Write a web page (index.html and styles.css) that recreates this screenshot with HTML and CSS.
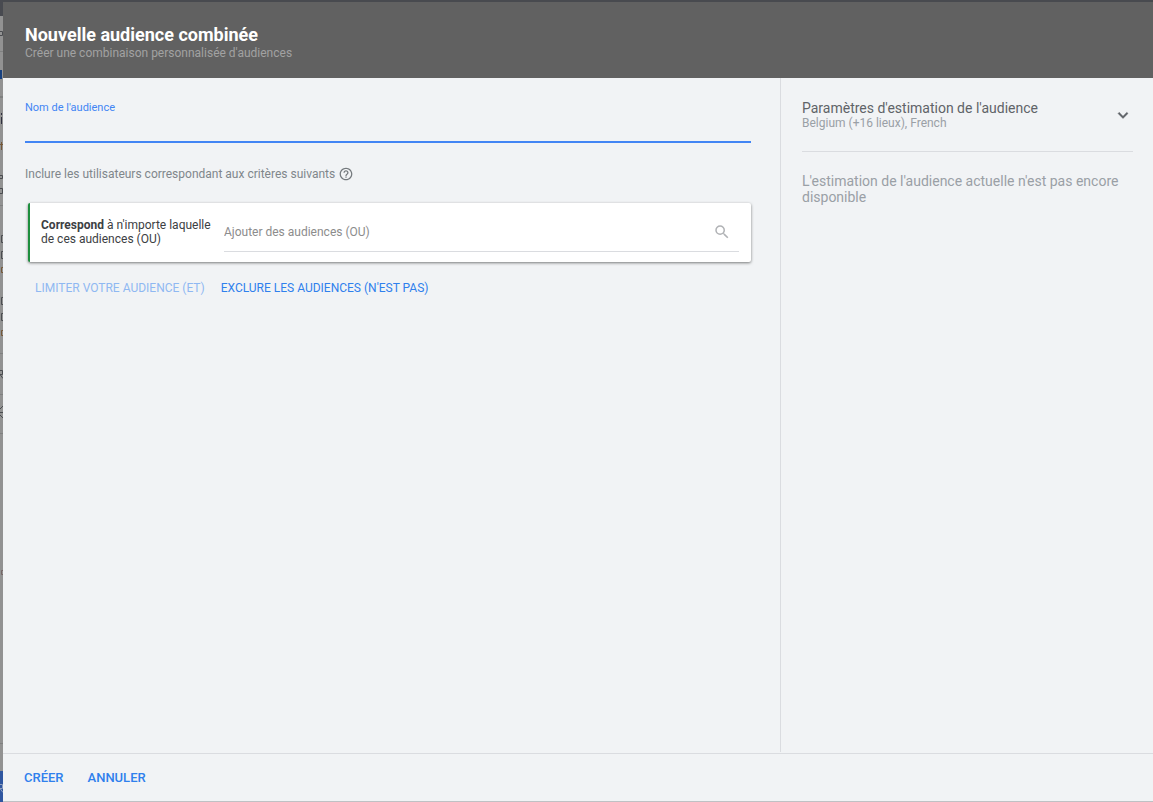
FILE: index.html
```html
<!DOCTYPE html>
<html lang="fr">
<head>
<meta charset="utf-8">
<meta name="viewport" content="width=device-width, initial-scale=1">
<title>Nouvelle audience combinée</title>
<link rel="stylesheet" href="styles.css">
</head>
<body>
<svg class="backdrop" width="3" height="802" viewBox="0 0 3 802" aria-hidden="true">
  <path fill="#929292" d="M0 0h3v802H0z"/>
  <path fill="#484a50" d="M0 0h3v16H0z"/>
  <path fill="#7f8080" d="M0 51h3v1H0zM0 96h3v2H0zM0 205h3v1H0zM0 353h3v1H0zM0 394h3v1H0zM0 433h3v1H0zM0 743h3v1H0z"/>
  <path fill="none" stroke="#4a4c50" d="M0 31.500h2.500v4H0M3 235.500H1.500v7H3M3 251.500H1.500v7H3M3 297.500H1.500v7H3M3 313.500H1.500v7H3M0 370.500h2.500v4H0l3 4M3 406l-3 3M0 412.500h3M0 415l3 3M0 188.500h2.500v5H0M0 175.500h2.500v3H0"/>
  <path fill="#17407f" d="M0 70h2v9H0z"/>
  <path fill="#2f3040" d="M1 117h1v7H1zM1 113h1v2H1z"/>
  <path fill="none" stroke="#755838" d="M1.500 142v8M0 144.500h3M3 267.500H1.500v5H3M3 330.500H1.500v5H3"/>
  <path fill="none" stroke="#756666" d="M3 570.500H1.500v4H3"/>
  <path fill="#2f56a0" d="M0 771h3v31H0z"/>
  <path fill="none" stroke="#8fa0c0" d="M0 784.500h2.500v4H0l3 4"/>
</svg>
<div class="dialog" role="dialog" aria-labelledby="dialog-title">
  <header class="header">
    <h1 class="title" id="dialog-title">Nouvelle audience combinée</h1>
    <p class="subtitle">Créer une combinaison personnalisée d'audiences</p>
  </header>
  <div class="body">
    <main class="editor">
      <div class="field">
        <label class="field-label" for="name">Nom de l'audience</label>
        <input class="field-input" id="name" type="text">
      </div>
      <div class="criteria">
        <span>Inclure les utilisateurs correspondant aux critères suivants</span>
        <button class="help" type="button" aria-label="Aide">
          <svg width="14" height="14" viewBox="1 1 22 22"><path fill="currentColor" d="M11 18h2v-2h-2v2zm1-16C6.480 2 2 6.480 2 12s4.480 10 10 10 10-4.480 10-10S17.520 2 12 2zm0 18c-4.410 0-8-3.590-8-8s3.590-8 8-8 8 3.590 8 8-3.590 8-8 8zm0-14c-2.210 0-4 1.790-4 4h2c0-1.100.9-2 2-2s2 .9 2 2c0 2-3 1.750-3 5h2c0-2.250 3-2.500 3-5 0-2.210-1.790-4-4-4z"/></svg>
        </button>
      </div>
      <section class="card">
        <label class="card-label" for="audiences"><b>Correspond</b> à n'importe laquelle de ces audiences (OU)</label>
        <div class="search">
          <input class="search-input" id="audiences" type="text" placeholder="Ajouter des audiences (OU)">
          <svg class="search-icon" width="18" height="18" viewBox="0 0 24 24" aria-hidden="true"><path fill="currentColor" d="M15.500 14h-.79l-.28-.27A6.470 6.470 0 0 0 16 9.500 6.500 6.500 0 1 0 9.500 16c1.610 0 3.090-.59 4.230-1.570l.27.28v.79l5 4.990L20.490 19l-4.990-5zm-6 0C7.010 14 5 11.990 5 9.500S7.010 5 9.500 5 14 7.010 14 9.500 11.990 14 9.500 14z"/></svg>
        </div>
      </section>
      <div class="links">
        <button class="text-button" type="button" disabled>LIMITER VOTRE AUDIENCE (ET)</button>
        <button class="text-button" type="button">EXCLURE LES AUDIENCES (N'EST PAS)</button>
      </div>
    </main>
    <aside class="side">
      <button class="settings" type="button" aria-expanded="false">
        <span class="settings-text">
          <span class="settings-title">Paramètres d'estimation de l'audience</span>
          <span class="settings-value">Belgium (+16 lieux), French</span>
        </span>
        <svg class="chevron" width="20" height="20" viewBox="0 0 24 24" aria-hidden="true"><path fill="currentColor" d="M7.410 8.840 12 13.420l4.590-4.580L18 10.250l-6 6-6-6z" stroke="currentColor" stroke-width=".5"/></svg>
      </button>
      <p class="estimate">L'estimation de l'audience actuelle n'est pas encore disponible</p>
    </aside>
  </div>
  <footer class="footer">
    <button class="action" type="button">CRÉER</button>
    <button class="action" type="button">ANNULER</button>
  </footer>
</div>
</body>
</html>
```
FILE: styles.css
```css
* { box-sizing: border-box; }

body {
  margin: 0;
  background: #484a50;
  font-family: Roboto, "Liberation Sans", sans-serif;
  font-size: 12px;
  line-height: 14px;
  color: #3c4043;
}

h1, p { margin: 0; }

button {
  padding: 0;
  border: 0;
  background: none;
  font: inherit;
  color: inherit;
  text-align: left;
}

input { font: inherit; border: 0; outline: 0; background: none; padding: 0; min-width: 0; }

.backdrop { position: absolute; left: 0; top: 0; }

.dialog {
  display: flex;
  flex-direction: column;
  min-height: 100vh;
  margin-left: 3px;
  border-top: 2px solid #484a4f;
  border-bottom: 1px solid #bfc1c4;
  background: #f1f3f5;
}

.header {
  padding: 22px 22px 18px;
  background: #616161;
}
.title { font-size: 18px; line-height: 22px; font-weight: 700; color: #fff; }
.subtitle { color: #a2a2a2; line-height: 14px; }

.body { flex: 1; display: flex; padding-bottom: 1px; }

.editor { flex: 1; min-width: 0; padding: 23px 29px 24px 22px; }

.field { display: flex; flex-direction: column; border-bottom: 2px solid #4285f4; }
.field-label { font-size: 11px; line-height: 14px; color: #4285f4; }
.field-input { height: 26px; font-size: 14px; }

.criteria { display: flex; align-items: center; gap: 4px; margin-top: 24px; color: #80868b; }
.help { display: flex; color: #74797d; }

.card {
  display: flex;
  align-items: center;
  gap: 12px;
  margin: 22px 0 0 3px;
  padding: 9px 12px 10px 11px;
  border-left: 2px solid #1e8e3e;
  border-radius: 2px;
  background: #fff;
  box-shadow: 0 1px 3px rgba(0, 0, 0, .5);
}
.card-label { width: 171px; }
.card-label b { font-weight: 700; }
.search { flex: 1; display: flex; align-items: center; height: 40px; border-bottom: 1px solid #dadce0; padding-right: 8px; }
.search-input { flex: 1; height: 38px; }
.search-input::placeholder { color: #8c8c8c; opacity: 1; }
.search-icon { color: #b0b2b5; }

.links { display: flex; gap: 16px; margin: 19px 0 0 10px; color: #2f80ed; }
.text-button:disabled { color: #8fb8f2; }

.side { width: 373px; padding: 22px 20px 24px 21px; border-left: 1px solid #dadce0; }
.settings {
  display: flex;
  align-items: center;
  justify-content: space-between;
  width: 100%;
  padding-bottom: 21px;
  border-bottom: 1px solid #dadce0;
}
.settings-text { display: flex; flex-direction: column; }
.settings-title { font-size: 14px; line-height: 16px; color: #5f6368; }
.settings-value { color: #9aa0a6; }
.chevron { color: #5f6368; }
.estimate { margin-top: 21px; font-size: 14px; line-height: 16px; color: #9aa0a6; }

.footer { display: flex; gap: 24px; padding: 17px 21px 16px; border-top: 1px solid #dadce0; color: #2f80ed; }
.action { font-size: 13px; font-weight: 500; }
```
